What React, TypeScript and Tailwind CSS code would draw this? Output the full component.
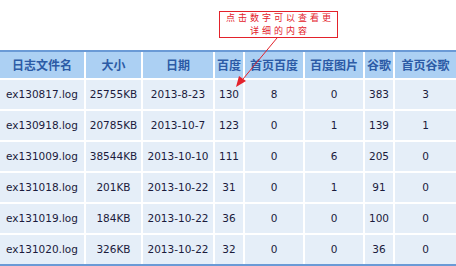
const headers = ["日志文件名", "大小", "日期", "百度", "首页百度", "百度图片", "谷歌", "首页谷歌"];

const rows: string[][] = [
  ["ex130817.log", "25755KB", "2013-8-23", "130", "8", "0", "383", "3"],
  ["ex130918.log", "20785KB", "2013-10-7", "123", "0", "1", "139", "1"],
  ["ex131009.log", "38544KB", "2013-10-10", "111", "0", "6", "205", "0"],
  ["ex131018.log", "201KB", "2013-10-22", "31", "0", "1", "91", "0"],
  ["ex131019.log", "184KB", "2013-10-22", "36", "0", "0", "100", "0"],
  ["ex131020.log", "326KB", "2013-10-22", "32", "0", "0", "36", "0"],
];

export default function App() {
  return (
    <div className="relative w-[456px] h-[266px] bg-white overflow-hidden">
      {/* Callout note */}
      <div className="absolute left-[219px] top-[11px] w-[119px] h-[27px] border border-[#e3222b] bg-white pl-[3px] text-center text-[9px] leading-[12.5px] tracking-[3px] text-[#e3222b] font-['Noto_Sans_CJK_SC',sans-serif]">
        点击数字可以查看更
        <br />
        详细的内容
      </div>

      {/* Table */}
      <div className="absolute left-0 top-[50px] w-[456px] border-t-2 border-b-2 border-[#6a9ad6] bg-white">
        <div className="grid grid-cols-[84px_55px_70px_28px_58px_58px_28px_61px] gap-[2px]">
          {headers.map((h) => (
            <div
              key={h}
              className="h-[26px] bg-[#acd0f3] flex items-center justify-center text-[12px] font-bold text-[#2c5ba6] font-['Noto_Sans_CJK_SC',sans-serif] whitespace-nowrap"
            >
              {h}
            </div>
          ))}
          {rows.map((r, i) =>
            r.map((c, j) => (
              <div
                key={i + "-" + j}
                className="h-[29px] bg-[#e5eef8] flex items-center justify-center text-[10.5px] text-[#1b1b3c] font-['DejaVu_Sans',sans-serif] whitespace-nowrap"
              >
                {c}
              </div>
            ))
          )}
        </div>
      </div>

      {/* Arrow from the note to the first count */}
      <svg className="absolute left-0 top-0 pointer-events-none" width="456" height="266">
        <line x1="277" y1="38" x2="243" y2="79" stroke="#e3222b" strokeWidth="1" />
        <polygon points="236,87 239,76 246,81" fill="#e3222b" />
      </svg>
    </div>
  );
}
